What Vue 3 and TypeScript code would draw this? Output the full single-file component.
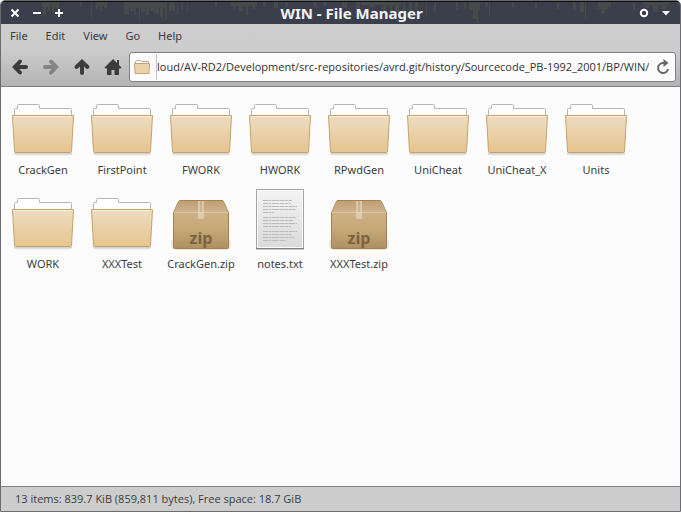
<script setup lang="ts">
import { onMounted, ref } from 'vue'

type Kind = 'folder' | 'zip' | 'text'
interface Entry { name: string; kind: Kind }

const entries: Entry[] = [
  { name: 'CrackGen', kind: 'folder' },
  { name: 'FirstPoint', kind: 'folder' },
  { name: 'FWORK', kind: 'folder' },
  { name: 'HWORK', kind: 'folder' },
  { name: 'RPwdGen', kind: 'folder' },
  { name: 'UniCheat', kind: 'folder' },
  { name: 'UniCheat_X', kind: 'folder' },
  { name: 'Units', kind: 'folder' },
  { name: 'WORK', kind: 'folder' },
  { name: 'XXXTest', kind: 'folder' },
  { name: 'CrackGen.zip', kind: 'zip' },
  { name: 'notes.txt', kind: 'text' },
  { name: 'XXXTest.zip', kind: 'zip' },
]
const menus: string[] = ['File', 'Edit', 'View', 'Go', 'Help']
const path = ref('b/cloud/AV-RD2/Development/src-repositories/avrd.git/history/Sourcecode_PB-1992_2001/BP/WIN/')
const pathBox = ref<HTMLInputElement | null>(null)

// Streaks of the title bar texture: x, width, height
const streaks: [number, number, number][] = [
  [41, 5, 5], [42, 3, 13], [46, 9, 4], [47, 2, 9], [51, 2, 11], [54, 4, 6], [79, 2, 4], [90, 1, 16],
  [95, 11, 4], [95, 2, 7], [99, 2, 9], [103, 3, 6], [123, 5, 12], [128, 38, 6], [129, 5, 9],
  [133, 2, 13], [138, 1, 20], [140, 4, 10], [145, 3, 13], [149, 4, 9], [153, 5, 11],
  [159, 2, 15], [161, 1, 19], [164, 2, 18], [168, 6, 9], [176, 1, 12], [180, 2, 7], [186, 1, 10], [214, 2, 5],
  [230, 26, 4], [232, 2, 7], [238, 4, 9], [245, 2, 13], [252, 2, 7], [262, 3, 4], [273, 4, 6], [284, 3, 5],
  [312, 4, 5], [322, 3, 4], [341, 5, 6], [355, 4, 8], [360, 40, 3], [368, 6, 5], [381, 4, 9], [389, 2, 13],
  [394, 4, 10], [402, 2, 16], [408, 3, 12], [414, 3, 8], [425, 1, 15], [433, 2, 10],
  [455, 2, 9], [463, 2, 7], [468, 11, 8], [472, 4, 17], [476, 1, 20], [484, 3, 5], [488, 1, 15], [511, 2, 5],
  [534, 2, 6], [556, 2, 7], [572, 3, 8], [579, 4, 10], [584, 1, 16], [597, 10, 7], [600, 4, 12], [607, 3, 5],
  [632, 2, 8], [642, 26, 3], [645, 3, 6], [652, 5, 10], [661, 4, 7],
]
// Lines on the text page: y, width
const textLines: [number, number][] = [
  [12, 29], [15, 28], [18, 34], [21, 33], [24, 11],
  [29, 33], [32, 30], [35, 34], [38, 28],
  [43, 34], [46, 28], [49, 31], [52, 23],
]

onMounted(() => {
  if (pathBox.value) pathBox.value.scrollLeft = pathBox.value.scrollWidth
})
</script>

<template>
  <div class="window">
    <header class="titlebar">
      <svg class="texture" width="681" height="24" aria-hidden="true">
        <rect v-for="s in streaks" :key="s[0] + '-' + s[2]" :x="s[0]" y="0" :width="s[1]" :height="s[2]" />
      </svg>
      <div class="controls">
        <button aria-label="Close"><svg width="10" height="10" viewBox="0 0 10 10"><path d="M1.500 1.500l7 7M8.500 1.500l-7 7" stroke="#fff" stroke-width="2" /></svg></button>
        <button aria-label="Minimize"><svg width="10" height="10" viewBox="0 0 10 10"><path d="M1 5h8" stroke="#fff" stroke-width="2" /></svg></button>
        <button aria-label="Maximize"><svg width="10" height="10" viewBox="0 0 10 10"><path d="M1 5h8M5 1v8" stroke="#fff" stroke-width="2" /></svg></button>
      </div>
      <h1>WIN - File Manager</h1>
      <div class="controls">
        <button aria-label="Stick"><svg width="10" height="10" viewBox="0 0 10 10"><circle cx="5" cy="5" r="3.200" fill="none" stroke="#fff" stroke-width="2" /></svg></button>
        <button aria-label="Window menu"><svg width="10" height="10" viewBox="0 0 10 10"><path d="M1 3h8L5 7.500z" fill="#fff" /></svg></button>
      </div>
    </header>
    <div class="chrome">
      <nav class="menubar">
        <button v-for="m in menus" :key="m">{{ m }}</button>
      </nav>
      <div class="toolbar">
        <button aria-label="Back"><svg width="18" height="18" viewBox="0 0 18 18"><path d="M9 3.500L3.800 9 9 14.500M4.500 9H15" class="arrow" /></svg></button>
        <button aria-label="Forward" disabled><svg width="18" height="18" viewBox="0 0 18 18"><path d="M9 3.500L14.200 9 9 14.500M13.500 9H3" class="arrow" /></svg></button>
        <button aria-label="Up"><svg width="18" height="18" viewBox="0 0 18 18"><path d="M3.500 9L9 3.800 14.500 9M9 4.500V15" class="arrow" /></svg></button>
        <button aria-label="Home"><svg width="18" height="18" viewBox="0 0 18 18"><path d="M9 1L0.500 9.500l1 1H3V17h4.500v-5h3v5H15v-6.500h1.500l1-1L15 7V2h-2v3z" fill="#3c3c3c" /></svg></button>
        <div class="location">
          <svg class="mini" width="18" height="16" viewBox="0 0 18 16" aria-hidden="true">
            <path d="M2.500 5V2.500l1-1h4l1 1h7V5" fill="#fafafa" stroke="#a9a9a9" />
            <path d="M1.500 4.500h15l-.5 10H2z" fill="#ebd2aa" stroke="#c4a570" />
          </svg>
          <input ref="pathBox" v-model="path" aria-label="Location" spellcheck="false" />
          <button class="reload" aria-label="Reload"><svg width="14" height="16" viewBox="0 0 14 16"><path d="M9 4H7a5 5 0 1 0 5 6" fill="none" stroke="#666" stroke-width="2" /><path d="M7.500 0l5 4-5 4z" fill="#666" /></svg></button>
        </div>
      </div>
    </div>
    <main class="files">
      <div v-for="e in entries" :key="e.name" class="entry">
        <svg v-if="e.kind === 'folder'" width="64" height="64" viewBox="0 0 64 64" aria-hidden="true">
          <defs><linearGradient id="fold" x1="0" y1="0" x2="0" y2="1"><stop offset="0" stop-color="#eeddc2" /><stop offset="1" stop-color="#e6c48e" /></linearGradient></defs>
          <path d="M3 60h58v1.500H3z" fill="#000" opacity=".16" />
          <path d="M5 62h54" stroke="#000" opacity=".07" />
          <path d="M3.500 24V16.500q0-1 1-1h2V12.500q0-1 1-1h20q1 0 1 1v3h31q1 0 1 1V24" fill="#fff" stroke="#b4b4b4" />
          <path d="M1.500 22.500h61L60.500 58.500q0 1-1 1h-55q-1 0-1-1z" fill="url(#fold)" stroke="#c2a36c" />
          <path d="M2.500 23.500h59" stroke="#f7edda" />
        </svg>
        <svg v-else-if="e.kind === 'zip'" width="64" height="64" viewBox="0 -1 64 64" aria-hidden="true">
          <defs>
            <linearGradient id="box" x1="0" y1="0" x2="0" y2="1"><stop offset="0" stop-color="#d2b88e" /><stop offset=".6" stop-color="#c6a878" /><stop offset="1" stop-color="#b08f5f" /></linearGradient>
            <linearGradient id="lid" x1="0" y1="0" x2="0" y2="1"><stop offset="0" stop-color="#bf9f75" /><stop offset="1" stop-color="#cdb28c" /></linearGradient>
          </defs>
          <rect x="2" y="50" width="60" height="12" rx="5" fill="#000" opacity=".09" />
          <path d="M9.500 13.500q.3-1 1.500-1h42q1.200 0 1.500 1l5 11v35q0 1-1 1h-53q-1 0-1-1v-35z" fill="url(#box)" stroke="#a5824f" />
          <path d="M10 13h44l5 11H5z" fill="url(#lid)" />
          <path d="M5 24.500h54" stroke="#dcc6a0" />
          <path d="M29 13h6v18h-6z" fill="#e6d6bd" opacity=".7" />
          <path d="M32 13v11" stroke="#b89a70" />
          <text x="32" y="56" class="ziptext">zip</text>
        </svg>
        <svg v-else width="64" height="64" viewBox="0 -1 64 64" aria-hidden="true">
          <defs><linearGradient id="page" x1="0" y1="0" x2="0" y2="1"><stop offset="0" stop-color="#f3f3f3" /><stop offset="1" stop-color="#dadada" /></linearGradient></defs>
          <path d="M8 60h48v2H8z" fill="#000" opacity=".2" />
          <path d="M8.500 1.500h47v59h-47z" fill="url(#page)" stroke="#a2a2a2" />
          <path d="M9.500 2.500h45v57h-45z" fill="none" stroke="#fafafa" />
          <path d="M8 60.500h48" stroke="#808080" />
          <path v-for="l in textLines" :key="l[0]" :d="`M15 ${l[0] + 0.5}h${l[1]}`" stroke="#bcbcbc" stroke-dasharray="5 .5 3 .5 7 .5" />
        </svg>
        <span>{{ e.name }}</span>
      </div>
    </main>
    <footer class="status">13 items: 839.7 KiB (859,811 bytes), Free space: 18.7 GiB</footer>
  </div>
</template>

<style>
body {
  background: #fff;
}
</style>

<style scoped>
.window {
  box-sizing: border-box;
  height: 100vh;
  display: flex;
  flex-direction: column;
  border: 1px solid #6c6b70;
  border-radius: 5px 5px 0 0;
  overflow: hidden;
  font-family: "Noto Sans", sans-serif;
  font-size: 11px;
  color: #3c3c3c;
  background: #fcfcfc;
}
button {
  border: 0;
  padding: 0;
  background: none;
  color: inherit;
  font: inherit;
}
svg {
  display: block;
}
.titlebar {
  position: relative;
  display: flex;
  align-items: center;
  justify-content: space-between;
  height: 23px;
  flex: none;
  padding: 0 9px;
  box-sizing: border-box;
  background: #3b3e4b;
  border-top: 1px solid #0c0d10;
  overflow: hidden;
}
.texture {
  position: absolute;
  left: 0;
  top: 0;
  fill: #464a48;
}
.controls {
  position: relative;
  display: flex;
  gap: 12px;
}
h1 {
  position: relative;
  margin: 0;
  font-size: 15px;
  line-height: 22px;
  font-weight: 700;
  color: #f3f4f7;
}
.chrome {
  flex: none;
  background: linear-gradient(#cecece, #cdcdcd 38%, #b3b3b3);
  border-bottom: 1px solid #808080;
}
.menubar {
  display: flex;
  gap: 18px;
  height: 24px;
  padding: 0 9px;
}
.menubar button {
  height: 22px;
}
.toolbar {
  display: flex;
  align-items: center;
  gap: 13px;
  padding: 4px 4px 4px 10px;
}
.toolbar > button:disabled {
  opacity: .45;
}
.arrow {
  fill: none;
  stroke: #3c3c3c;
  stroke-width: 4;
  stroke-linecap: round;
}
.location {
  flex: 1;
  min-width: 0;
  display: flex;
  align-items: center;
  height: 30px;
  margin-left: -6px;
  padding: 0 5px 0 3px;
  box-sizing: border-box;
  border: 1px solid #808080;
  border-radius: 3px;
  background: #fcfcfc;
}
.mini {
  flex: none;
}
.location input {
  flex: 1;
  min-width: 0;
  height: 26px;
  box-sizing: border-box;
  margin: 0 7px 0 5px;
  padding: 0 0 2px;
  border: 0;
  border-left: 1px solid #c8c8c8;
  outline: 0;
  background: none;
  font: 11px "Open Sans", "Noto Sans", sans-serif;
  color: #333;
}
.files {
  flex: 1;
  display: grid;
  grid-template-columns: repeat(auto-fill, 79px);
  grid-auto-rows: 94px;
  padding: 6px 2px;
}
.entry {
  display: flex;
  flex-direction: column;
  align-items: center;
  gap: 5px;
  line-height: 16px;
}
.entry span {
  padding-left: 1px;
}
.ziptext {
  font: 700 16px "Open Sans", sans-serif;
  text-anchor: middle;
  fill: #7a6340;
}
.status {
  flex: none;
  height: 24px;
  padding-left: 14px;
  line-height: 24px;
  font-family: "Open Sans", "Noto Sans", sans-serif;
  background: #cdcdcd;
  border-top: 1px solid #808080;
}
</style>
